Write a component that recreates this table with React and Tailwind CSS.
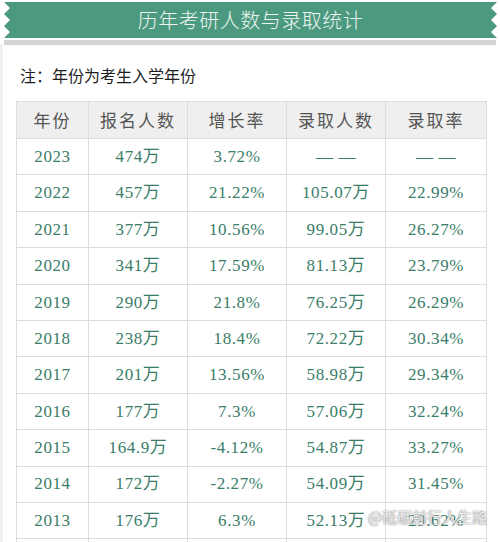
import React from "react";

const rows = [
  ["2023", "474万", "3.72%", "— —", "— —"],
  ["2022", "457万", "21.22%", "105.07万", "22.99%"],
  ["2021", "377万", "10.56%", "99.05万", "26.27%"],
  ["2020", "341万", "17.59%", "81.13万", "23.79%"],
  ["2019", "290万", "21.8%", "76.25万", "26.29%"],
  ["2018", "238万", "18.4%", "72.22万", "30.34%"],
  ["2017", "201万", "13.56%", "58.98万", "29.34%"],
  ["2016", "177万", "7.3%", "57.06万", "32.24%"],
  ["2015", "164.9万", "-4.12%", "54.87万", "33.27%"],
  ["2014", "172万", "-2.27%", "54.09万", "31.45%"],
  ["2013", "176万", "6.3%", "52.13万", "29.62%"],
  ["", "", "", "", ""],
];

const headers = ["年份", "报名人数", "增长率", "录取人数", "录取率"];

export default function App() {
  return (
    <div className="relative w-[500px] h-[542px] overflow-hidden bg-white font-['Liberation_Serif','Noto_Sans_CJK_SC',serif]">
      <div className="absolute left-0 top-[44px] bottom-0 w-[3px] bg-[#f1f1f1]" />
      <div className="pt-[2px] pl-[4px]">
        <div className="w-[493px] h-[36px] bg-[#4b9a80] flex items-center justify-center [clip-path:polygon(0_0,493px_0,487px_6px,493px_12px,487px_18px,493px_24px,487px_30px,493px_36px,0_36px,6px_30px,0_24px,6px_18px,0_12px,6px_6px)]">
          <span className="text-[20px] leading-none text-[#eef5f1] font-['Noto_Sans_CJK_SC',sans-serif] font-light tracking-[0.5px]">
            历年考研人数与录取统计
          </span>
        </div>
        <div className="mt-[2px] w-[492px] h-[5px] bg-[#d4d4d4]" />
      </div>
      <div className="pl-[20px] pt-[22px] h-[56px] text-[16px] leading-none text-[#1e1e1e] font-['Noto_Sans_CJK_SC',sans-serif]">
        注：年份为考生入学年份
      </div>
      <table className="ml-[16px] table-fixed border-collapse w-[470px]">
        <colgroup>
          <col className="w-[72px]" />
          <col className="w-[99px]" />
          <col className="w-[99px]" />
          <col className="w-[99px]" />
          <col className="w-[101px]" />
        </colgroup>
        <thead>
          <tr className="h-[37px] bg-[#efefef]">
            {headers.map((h) => (
              <th
                key={h}
                className="border border-[#dcdcdc] p-0 text-center text-[17px] font-normal text-[#555555] tracking-[2px] font-['Noto_Sans_CJK_SC',sans-serif]"
              >
                {h}
              </th>
            ))}
          </tr>
        </thead>
        <tbody>
          {rows.map((r, ri) => (
            <tr key={ri} className="h-[36.4px]">
              {r.map((c, i) => (
                <td
                  key={i}
                  className="border border-[#dcdcdc] p-0 text-center text-[17px] text-[#3a7d69] tracking-[0.6px]"
                >
                  {c}
                </td>
              ))}
            </tr>
          ))}
        </tbody>
      </table>
      <div className="absolute left-[368px] top-[509px] text-[15px] leading-none text-white/80 font-['Noto_Sans_CJK_SC',sans-serif] [text-shadow:0_0_1px_#888,0_0_2px_#999]">
        @砥砺前行人生路
      </div>
    </div>
  );
}
